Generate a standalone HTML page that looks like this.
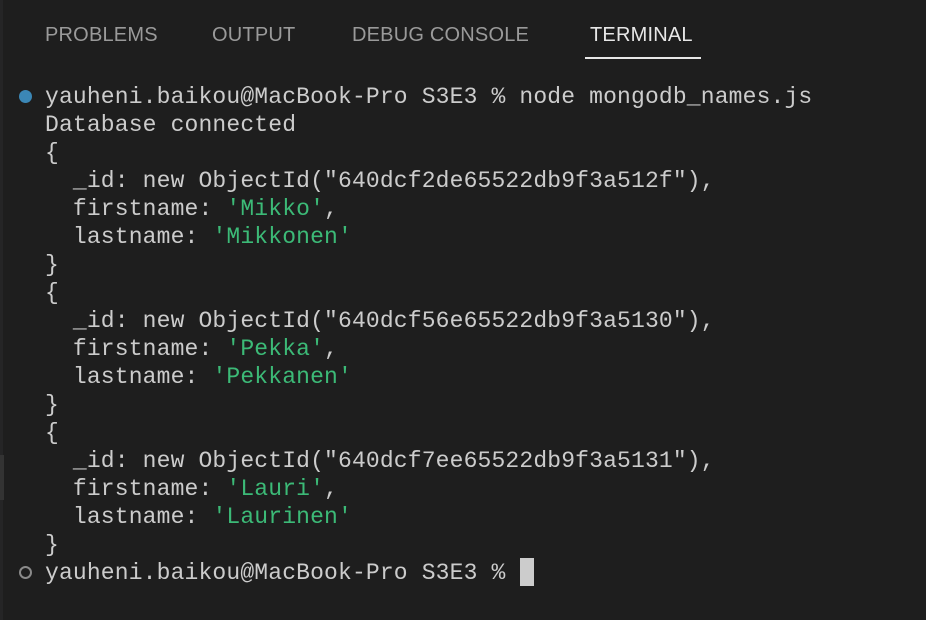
<!DOCTYPE html>
<html><head><style>
html,body{margin:0;padding:0;background:#1e1e1e;width:926px;height:620px;overflow:hidden;position:relative}
.strip{position:absolute;left:0;top:0;width:3px;height:620px;background:#252526}
.sb{position:absolute;left:0;top:455px;width:4px;height:45px;background:#333}
.tab{position:absolute;top:24px;font:20px "Liberation Sans",sans-serif;color:#9a9a9a;letter-spacing:0.2px}
.ul{position:absolute;left:585px;top:57px;width:116px;height:2px;background:#e7e7e7}
pre{position:absolute;left:45px;top:83px;margin:0;font:23px/28px "Liberation Mono",monospace;color:#cccccc;letter-spacing:0.15px}
.g{color:#3cba77}
.dot{position:absolute;left:19px;top:90px;width:13px;height:13px;border-radius:50%;background:#3b87b6}
.dot2{position:absolute;left:19px;top:566px;width:9px;height:9px;border-radius:50%;border:2px solid #8a8a8a}
.cur{position:absolute;left:520px;top:558px;width:14px;height:28px;background:#cccccc}
</style></head><body>
<div class="strip"></div><div class="sb"></div>
<div class="tab" style="left:45px">PROBLEMS</div>
<div class="tab" style="left:212px">OUTPUT</div>
<div class="tab" style="left:352px">DEBUG CONSOLE</div>
<div class="tab" style="left:590px;color:#e7e7e7">TERMINAL</div>
<div class="ul"></div>
<div class="dot"></div>
<pre>yauheni.baikou@MacBook-Pro S3E3 % node mongodb_names.js
Database connected
{
  _id: new ObjectId("640dcf2de65522db9f3a512f"),
  firstname: <span class="g">'Mikko'</span>,
  lastname: <span class="g">'Mikkonen'</span>
}
{
  _id: new ObjectId("640dcf56e65522db9f3a5130"),
  firstname: <span class="g">'Pekka'</span>,
  lastname: <span class="g">'Pekkanen'</span>
}
{
  _id: new ObjectId("640dcf7ee65522db9f3a5131"),
  firstname: <span class="g">'Lauri'</span>,
  lastname: <span class="g">'Laurinen'</span>
}
yauheni.baikou@MacBook-Pro S3E3 %</pre>
<div class="dot2"></div>
<div class="cur"></div>
</body></html>
